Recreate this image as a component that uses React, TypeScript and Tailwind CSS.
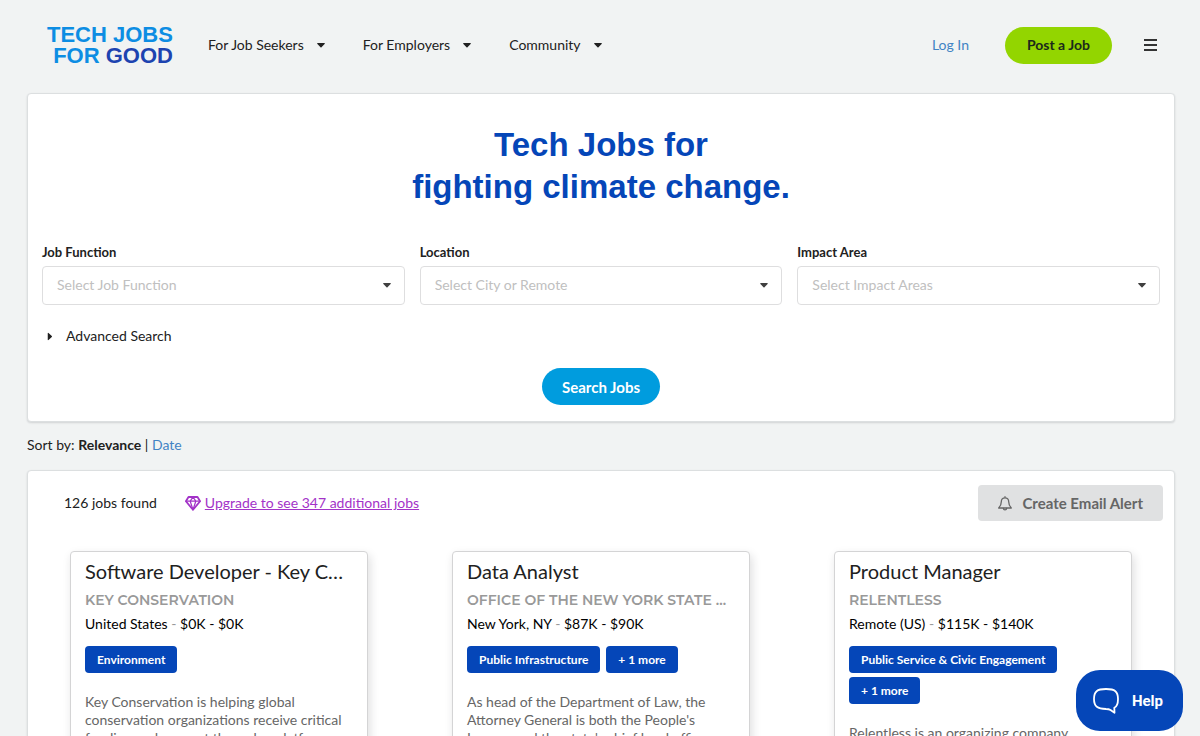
import { useState } from 'react';

const menus = ['For Job Seekers', 'For Employers', 'Community'];

const filters = [
  { id: 'job-function', label: 'Job Function', placeholder: 'Select Job Function', options: ['Data', 'Engineering', 'Product'] },
  { id: 'location', label: 'Location', placeholder: 'Select City or Remote', options: ['New York, NY', 'Remote (US)'] },
  { id: 'impact-area', label: 'Impact Area', placeholder: 'Select Impact Areas', options: ['Environment', 'Public Infrastructure'] },
];

const jobs = [
  {
    title: 'Software Developer - Key Conservation',
    company: 'Key Conservation',
    location: 'United States',
    salary: '$0K - $0K',
    tags: ['Environment'],
    description:
      'Key Conservation is helping global conservation organizations receive critical funding and support through a platform',
  },
  {
    title: 'Data Analyst',
    company: 'Office of the New York State Attorney General',
    location: 'New York, NY',
    salary: '$87K - $90K',
    tags: ['Public Infrastructure', '+ 1 more'],
    description:
      "As head of the Department of Law, the Attorney General is both the People's Lawyer and the state's chief legal officer",
  },
  {
    title: 'Product Manager',
    company: 'Relentless',
    location: 'Remote (US)',
    salary: '$115K - $140K',
    tags: ['Public Service & Civic Engagement', '+ 1 more'],
    description: 'Relentless is an organizing company',
  },
];

function Caret({ className = '' }: { className?: string }) {
  return (
    <svg width="8" height="5" viewBox="0 0 8 5" fill="currentColor" className={className} aria-hidden="true">
      <path d="M.8 0h6.400c.6 0 .8.6.4 1L4.500 4.300c-.3.3-.7.3-1 0L.4 1C0 .6.2 0 .8 0z" />
    </svg>
  );
}

function GemIcon() {
  return (
    <svg width="16" height="15" viewBox="0 0 16 15" fill="none" stroke="currentColor" strokeWidth="1.8" strokeLinejoin="round" aria-hidden="true">
      <path d="M3.500 1h9l2.600 4.200L8 13.800.9 5.200z" />
      <path d="M.9 5.200h14.200M5.200 5.200L8 13.800l2.800-8.600M5.200 5.200L8 1l2.800 4.200" strokeWidth="1.2" />
    </svg>
  );
}

function BellIcon() {
  return (
    <svg width="14" height="15" viewBox="0 0 14 15" fill="none" stroke="currentColor" strokeWidth="1.3" strokeLinejoin="round" strokeLinecap="round" aria-hidden="true">
      <path d="M7 .7v1M7 1.800C4.600 1.800 3.300 3.500 3.300 5.800c0 3-.8 4.500-2.600 6.200h12.600c-1.800-1.700-2.600-3.200-2.600-6.200C10.700 3.500 9.400 1.800 7 1.800z" />
      <path d="M5.400 12.300a1.600 1.600 0 0 0 3.200 0" />
    </svg>
  );
}

function ChatIcon() {
  return (
    <svg width="28" height="27" viewBox="0 0 28 27" fill="none" stroke="currentColor" strokeWidth="1.8" strokeLinejoin="round" aria-hidden="true">
      <path d="M14 2C5 2 2 4.500 2 12c0 7.700 3.600 9.800 12 10 1.900 0 3.200.2 4.500 1l4 2.700-.2-4.900C25.500 19.400 26 16.500 26 12c0-7.500-3-10-12-10z" />
    </svg>
  );
}

function Header() {
  return (
    <header className="flex items-center h-[93px] pl-[47px] pr-[43px] pb-[3px]">
      <a href="#" className="font-['Liberation_Sans'] font-bold text-[22px] leading-[21px] text-right text-[#0d8de3] whitespace-nowrap">
        TECH JOBS
        <br />
        FOR <span className="text-[#1d43b0]">GOOD</span>
      </a>
      <nav className="flex gap-[38px] ml-[35px]">
        {menus.map((m) => (
          <button key={m} className="flex items-center gap-[13px] whitespace-nowrap">
            {m}
            <Caret />
          </button>
        ))}
      </nav>
      <div className="flex items-center ml-auto">
        <a href="#" className="text-[#4183c4] mr-9">Log In</a>
        <button className="h-[37px] px-[22px] rounded-full bg-[#93d500] font-bold text-[#1b2a1b] mr-8">Post a Job</button>
        <button aria-label="Menu" className="flex flex-col gap-[3px] w-[13px]">
          <span className="h-0.5 w-full bg-[#333]" />
          <span className="h-0.5 w-full bg-[#333]" />
          <span className="h-0.5 w-full bg-[#333]" />
        </button>
      </div>
    </header>
  );
}

function SearchPanel() {
  const [open, setOpen] = useState(false);

  return (
    <section className="bg-white rounded border border-[#dcdfe0] shadow-[0_1px_2px_0_rgba(34,36,38,0.15)] px-3.5 pt-[30px] pb-4">
      <h1 className="font-['Liberation_Sans'] font-bold text-[33px] leading-[42px] text-center text-[#0546b8]">
        Tech Jobs for
        <br />
        fighting climate change.
      </h1>
      <form onSubmit={(e) => e.preventDefault()}>
        <div className="grid grid-cols-3 gap-[15px] mt-[35px]">
          {filters.map((f) => (
            <div key={f.id}>
              <label htmlFor={f.id} className="block text-[13px] leading-[18px] font-bold mb-[5px]">{f.label}</label>
              <div className="relative">
                <select
                  id={f.id}
                  defaultValue=""
                  className="block w-full h-[39px] px-3.5 pb-0.5 appearance-none bg-white border border-[#dededf] rounded text-[#c0c0c0] outline-none focus:border-[#96c8da]"
                >
                  <option value="">{f.placeholder}</option>
                  {f.options.map((o) => (
                    <option key={o}>{o}</option>
                  ))}
                </select>
                <Caret className="absolute right-3.5 top-[17px] pointer-events-none text-[#404040]" />
              </div>
            </div>
          ))}
        </div>
        <button type="button" onClick={() => setOpen(!open)} aria-expanded={open} className="flex items-center gap-3 mt-[21px] ml-1">
          <Caret className={open ? '' : '-rotate-90'} />
          Advanced Search
        </button>
        <div className="flex justify-center mt-[22px]">
          <button type="submit" className="h-[37px] px-5 rounded-full bg-[#009cde] text-white text-[15px] font-bold">Search Jobs</button>
        </div>
      </form>
    </section>
  );
}

function JobCard({ job }: { job: (typeof jobs)[number] }) {
  return (
    <article className="w-full max-w-[298px] mx-auto px-3.5 pt-1.5 pb-4 bg-white border border-[#d4d4d5] rounded shadow-[2px_4px_10px_0_rgba(34,36,38,0.15)]">
      <h2 className="text-[20px] leading-[26px] truncate">{job.title}</h2>
      <div className="mt-[5px] font-[Montserrat,Inter] font-semibold text-sm leading-[22px] uppercase text-[#999] truncate">{job.company}</div>
      <div className="leading-6 mt-px text-black">
        {job.location} <span className="text-[#999]">-</span> {job.salary}
      </div>
      <div className="flex flex-wrap gap-x-1.5 gap-y-1 mt-2.5">
        {job.tags.map((tag) => (
          <span key={tag} className="h-[27px] px-3 rounded bg-[#0546b8] text-white text-xs leading-[27px] font-bold">{tag}</span>
        ))}
      </div>
      <p className="mt-5 leading-[18px] text-[#666]">{job.description}</p>
    </article>
  );
}

export default function App() {
  return (
    <div className="min-h-screen bg-[#f1f3f3] font-[Lato,sans-serif] text-sm leading-5 text-[#212121]">
      <Header />
      <main className="pl-[27px] pr-[25px] pb-8">
        <SearchPanel />
        <div className="mt-[13px] mb-[15px]">
          Sort by: <b>Relevance</b> | <a href="#" className="text-[#4183c4]">Date</a>
        </div>
        <section className="bg-white rounded border border-[#dcdfe0] shadow-[0_1px_2px_0_rgba(34,36,38,0.15)] pt-3.5 pb-8">
          <div className="flex items-center pl-9 pr-[11px]">
            <span>126 jobs found</span>
            <a href="#" className="flex items-center gap-1 ml-7 text-[#a333c8]">
              <GemIcon />
              <span className="underline">Upgrade to see 347 additional jobs</span>
            </a>
            <button className="flex items-center gap-2.5 h-9 px-5 ml-auto rounded bg-[#e0e1e2] text-[#666] text-[15px] font-bold">
              <BellIcon />
              Create Email Alert
            </button>
          </div>
          <div className="grid grid-cols-3 items-start mt-[30px]">
            {jobs.map((job) => (
              <JobCard key={job.title} job={job} />
            ))}
          </div>
        </section>
      </main>
      <button className="fixed right-[17px] bottom-[5px] flex items-center gap-3 h-[61px] pl-4 pr-5 rounded-3xl bg-[#0546b8] text-white font-[Roboto] font-bold text-[15px]">
        <ChatIcon />
        Help
      </button>
    </div>
  );
}
